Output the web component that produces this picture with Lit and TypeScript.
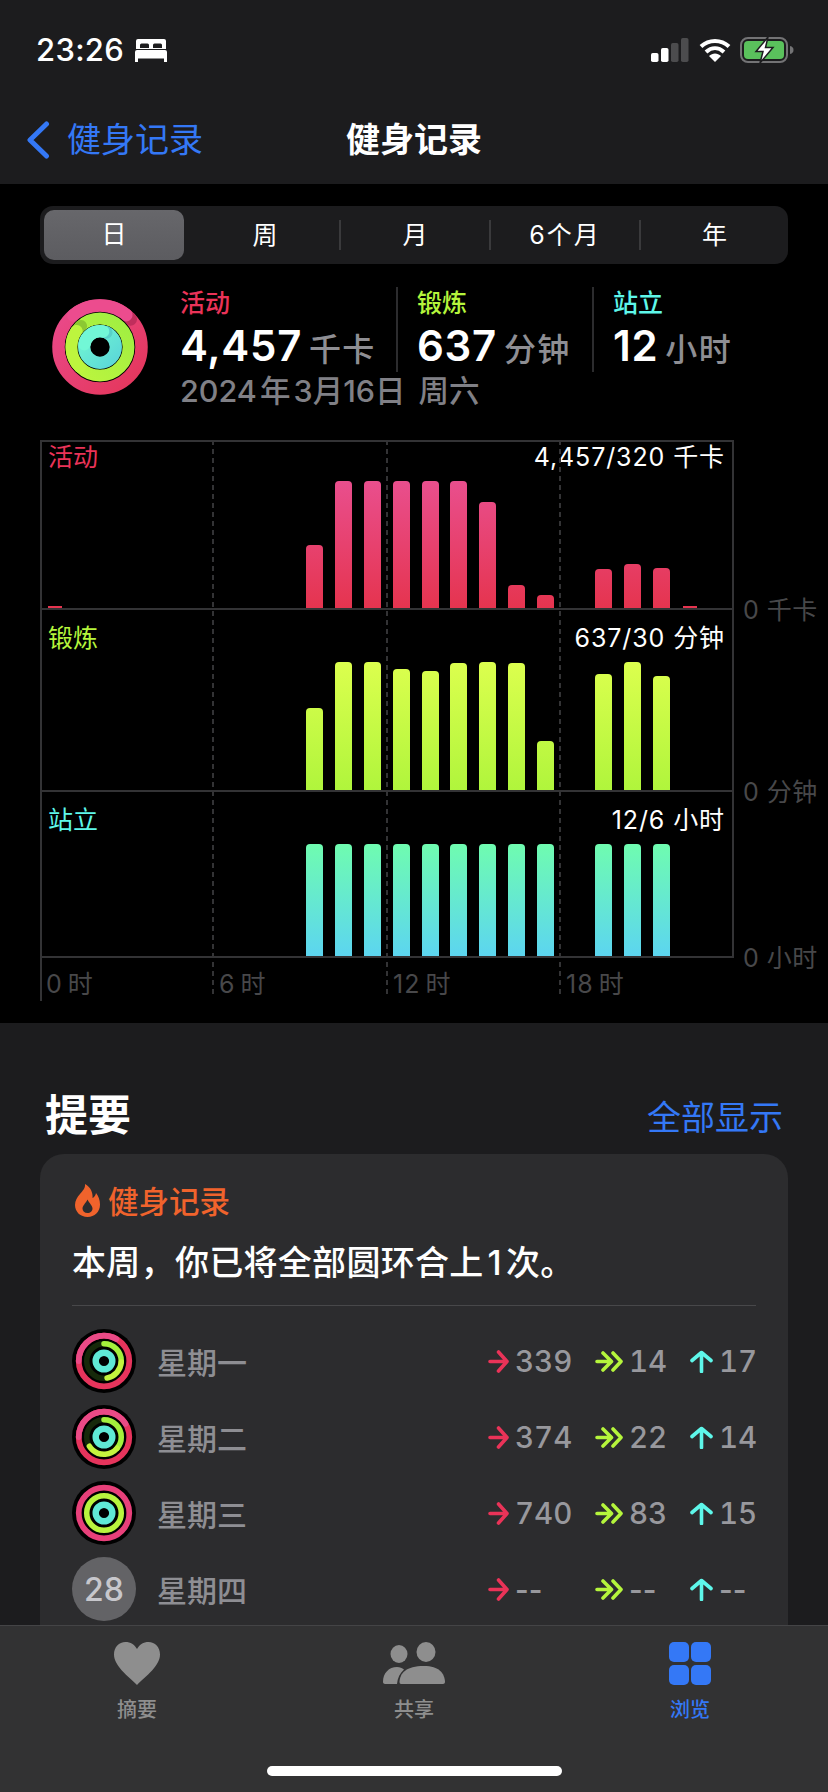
import { LitElement, html, css, svg } from "lit";
import { customElement } from "lit/decorators.js";

const MOVE = [[0,2],[9,63],[10,127],[11,127],[12,127],[13,127],[14,127],[15,106],[16,23],[17,13],[19,39],[20,44],[21,40],[22,2]];
const EX = [[9,82],[10,128],[11,128],[12,121],[13,119],[14,127],[15,128],[16,127],[17,49],[19,116],[20,128],[21,114]];
const STAND = [9,10,11,12,13,14,15,16,17,19,20,21].map((h) => [h, 112]);

const arc = (r: number, sw: number, color: string, pct: number, rot = -90) =>
  svg`<circle cx="50" cy="50" r=${r} fill="none" stroke=${color} stroke-width=${sw} stroke-linecap="round" pathLength="100" stroke-dasharray="${pct} 200" transform="rotate(${rot} 50 50)"></circle>`;
const full = (r: number, sw: number, color: string) =>
  svg`<circle cx="50" cy="50" r=${r} fill="none" stroke=${color} stroke-width=${sw}></circle>`;

const arrowMove = html`<svg class="a-move" viewBox="0 0 21 23"><path d="M2 11.500H18.500M10.500 2L19 11.500L10.500 21" fill="none" stroke="#ea3358" stroke-width="3.600" stroke-linecap="round" stroke-linejoin="round"/></svg>`;
const arrowEx = html`<svg class="a-ex" viewBox="0 0 28 23"><path d="M2 11.500H14M8 3L16.500 11.500L8 20M18 3L26 11.500L18 20" fill="none" stroke="#b5f53c" stroke-width="3.600" stroke-linecap="round" stroke-linejoin="round"/></svg>`;
const arrowStand = html`<svg class="a-st" viewBox="0 0 23 23"><path d="M11.500 21.500V3M2 10.500L11.500 2.500L21 10.500" fill="none" stroke="#5ef7ea" stroke-width="3.600" stroke-linecap="round" stroke-linejoin="round"/></svg>`;

const smallRing = (g: number, p: number) => html`<svg class="sring" viewBox="0 0 100 100">
  <circle cx="50" cy="50" r="50" fill="#000"></circle>
  ${full(39.5, 9, "#e6345c")}
  ${arc(39.5, 9, "#ea4a86", 25 + p - 100, -180)}
  ${full(27, 8.6, "#16290a")}
  ${arc(27, 8.6, "#a4f03c", g * 0.55, -90)}
  ${arc(27, 8.6, "#c4f43e", g * 0.45, -90 + g * 1.98)}
  ${full(13, 10, "#5fe9d6")}
</svg>`;

@customElement("app-root")
export class AppRoot extends LitElement {
  static styles = css`
    :host { display: block; position: relative; width: 828px; height: 1792px; overflow: hidden; background: #1c1c1e; color: #fff; font-family: Inter, "Noto Sans CJK SC", sans-serif; }
    .head { height: 184px; background: #1c1c1e; display: flex; flex-direction: column; }
    .status { height: 100px; display: flex; align-items: flex-start; padding: 36px 34px 0 36px; box-sizing: border-box; }
    .time { font-size: 31px; line-height: 28px; font-weight: 500; letter-spacing: 0.3px; }
    .bed { width: 32px; height: 23px; margin: 3px 0 0 11px; }
    .sp { flex: 1; }
    .sig { width: 38px; height: 24px; margin-top: 2px; }
    .wifi { width: 32px; height: 25px; margin: 1px 0 0 10px; }
    .bat { width: 54px; height: 26px; margin: 1px 0 0 9px; }
    .nav { height: 84px; display: grid; grid-template-columns: 1fr auto 1fr; align-items: start; }
    .back { display: flex; align-items: center; padding-left: 26px; color: #3478f6; font-size: 34px; line-height: 48px; height: 48px; margin-top: 16px; }
    .back svg { width: 24px; height: 38px; margin-right: 17px; }
    .title { font-size: 34px; line-height: 48px; height: 48px; font-weight: 600; margin-top: 16px; }
    main { background: #000; height: 839px; padding-top: 22px; box-sizing: border-box; }
    .seg { margin: 0 40px; height: 58px; border-radius: 13px; background: #1c1c1e; display: grid; grid-template-columns: 149px 150px 150px 150px 149px; align-items: center; position: relative; font-size: 25px; }
    .seg div { height: 30px; line-height: 30px; text-align: center; border-left: 2px solid #3a3a3c; box-sizing: border-box; }
    .seg div.n { border-left-color: transparent; }
    .seg .six { letter-spacing: 2px; }
    .seg .pill { position: absolute; left: 4px; top: 4px; width: 140px; height: 50px; line-height: 48px; border: none; border-radius: 10px; background: linear-gradient(#67676b, #5c5c60); }
    .stats { display: flex; align-items: flex-start; margin-top: 23px; }
    .bigring { width: 96px; height: 96px; margin: 12px 0 0 52px; flex: none; }
    .info { margin-left: 32px; }
    .cols { display: flex; height: 85px; }
    .col { border-right: 2px solid #2c2c2e; width: 218px; box-sizing: border-box; height: 85px; }
    .col + .col { padding-left: 19px; width: 196px; }
    .col:last-child { border-right: none; }
    .lab { font-size: 25px; line-height: 33px; font-weight: 500; }
    .val { font-size: 42px; line-height: 52px; font-weight: 600; letter-spacing: 0.7px; white-space: nowrap; }
    .val span { font-size: 32px; font-weight: 500; color: #8e8e93; letter-spacing: 1.300px; margin-left: 7px; }
    .date { font-size: 30.5px; line-height: 38px; color: #808086; font-weight: 500; word-spacing: -5px; white-space: nowrap; }
    .date span { margin-left: 13px; }
    .move { color: #ea3358; } .ex { color: #b5f53c; } .st { color: #5ef7ea; }
    .chart { position: relative; margin: 30px 0 0 40px; width: 694px; }
    .dash { position: absolute; top: 0; width: 2px; height: 558px; background: repeating-linear-gradient(#333335 0 5px, transparent 5px 9px); }
    .row { display: flex; }
    .plot { width: 694px; box-sizing: border-box; flex: none; display: grid; border-left: 2px solid #333335; border-right: 2px solid #333335; border-bottom: 2px solid #333335; }
    .plot.p1 { height: 170px; border-top: 2px solid #333335; }
    .plot.p2 { height: 182px; }
    .plot.p3 { height: 166px; }
    .labels, .bars { grid-area: 1 / 1; }
    .labels { display: flex; justify-content: space-between; align-self: start; padding: 0 7px 0 6px; font-size: 25px; line-height: 30px; }
    .p2 .labels { padding-top: 13px; } .p3 .labels { padding-top: 13px; }
    .labels .v { color: #fff; letter-spacing: 0.9px; }
    .bars { display: flex; gap: 11.900px; padding-left: 4px; align-items: flex-end; align-self: end; height: 130px; }
    .slot { width: 17px; flex: none; display: flex; justify-content: center; align-items: flex-end; height: 100%; }
    .bar { width: 100%; border-radius: 4px 4px 0 0; background-repeat: no-repeat; background-position: bottom; background-size: 100% 128px; }
    .bar.tiny { width: 14px; border-radius: 0; }
    .bars.m .bar { background-image: linear-gradient(#e94f8e, #e5344f); }
    .bars.e .bar { background-image: linear-gradient(#dcff4e, #b0f53c); }
    .bars.s .bar { background-image: linear-gradient(#6ffcb0, #5cd5f0); background-size: 100% 112px; }
    .axis { flex: none; width: 90px; margin: 0 0 -15px 9px; align-self: flex-end; font-size: 25px; line-height: 30px; letter-spacing: 0.5px; color: #48484a; white-space: nowrap; }
    .times { height: 43px; border-left: 2px solid #333335; width: 694px; box-sizing: border-box; display: grid; grid-template-columns: 173px 174px 173px 1fr; padding: 10px 0 0 4px; font-size: 25px; line-height: 32px; color: #48484a; word-spacing: -3px; letter-spacing: 1px; }
    .sec { display: flex; justify-content: space-between; align-items: center; padding: 0 45px; height: 60px; margin-top: 62px; margin-bottom: 9px; }
    .sec h2 { margin: 0; font-size: 43px; line-height: 60px; font-weight: 700; }
    .sec a { font-size: 34px; color: #3478f6; }
    .card { margin: 0 40px; background: #2c2c2e; border-radius: 24px; padding: 24px 32px 100px; height: 600px; box-sizing: border-box; }
    .ct { display: flex; align-items: center; height: 44px; font-size: 30.5px; font-weight: 500; color: #f0632c; margin-left: 3px; }
    .ct svg { width: 25px; height: 33px; margin-right: 8px; }
    .msg { font-size: 34px; line-height: 46px; font-weight: 500; letter-spacing: 0.3px; margin-top: 18px; padding-bottom: 19px; border-bottom: 1px solid #48484a; white-space: nowrap; }
    .msg span { margin: 0 4px; }
    .day { display: grid; grid-template-columns: 64px 1fr 107px 95px 66px; align-items: center; height: 76px; }
    .list { margin-top: 17px; }
    .sring { width: 64px; height: 64px; display: block; }
    .num28 { width: 64px; height: 64px; border-radius: 50%; background: #636366; color: #c7c7cc; font-size: 32px; font-weight: 500; display: flex; align-items: center; justify-content: center; }
    .name { margin-left: 21px; font-size: 30px; font-weight: 500; color: #8e8e93; }
    .s { display: flex; align-items: center; font-size: 29.5px; color: #98989d; font-weight: 500; font-variant-numeric: tabular-nums; white-space: nowrap; }
    .s.none { font-variant-numeric: normal; letter-spacing: 0; font-weight: 600; }
    .s svg { flex: none; height: 23px; margin-right: 6px; }
    .a-move { width: 21px; } .a-ex { width: 28px; } .a-st { width: 23px; }
    .tab { position: absolute; left: 0; right: 0; bottom: 0; height: 167px; background: #323233; border-top: 1px solid #444446; box-sizing: border-box; display: grid; grid-template-columns: 276px 276px 276px; }
    .ti { display: flex; flex-direction: column; align-items: center; color: #8e8e8e; font-size: 20px; line-height: 24px; padding-top: 16px; font-weight: 500; }
    .ti svg { height: 44px; margin-bottom: 12px; }
    .ti.on { color: #3478f6; }
    .ti:nth-child(1) { margin-left: -2px; }
    .home { position: absolute; left: 267px; bottom: 16px; width: 295px; height: 10px; border-radius: 5px; background: #fff; }
  `;

  private bars(cls: string, data: number[][]) {
    return html`<div class="bars ${cls}">
      ${Array.from({ length: 24 }, (_, h) => {
        const d = data.find((x) => x[0] === h);
        return html`<div class="slot">${d ? html`<div class="bar ${d[1] < 3 ? "tiny" : ""}" style="height:${d[1]}px"></div>` : ""}</div>`;
      })}
    </div>`;
  }

  private day(name: string, ring: unknown, a: string, b: string, c: string) {
    const k = a === "--" ? "s none" : "s";
    return html`<div class="day">${ring}<div class="name">${name}</div>
      <div class=${k}>${arrowMove}${a}</div><div class=${k}>${arrowEx}${b}</div><div class=${k}>${arrowStand}${c}</div></div>`;
  }

  render() {
    return html`
      <div class="head">
        <div class="status">
          <span class="time">23:26</span>
          <svg class="bed" viewBox="0 0 32 23"><path fill="#fff" fill-rule="evenodd" d="M3 0H29A2 2 0 0 1 31 2V10H1V2A2 2 0 0 1 3 0ZM5 6V9H14V6A1.500 1.500 0 0 0 12.500 4.500H6.500A1.500 1.500 0 0 0 5 6ZM18 6V9H27V6A1.500 1.500 0 0 0 25.500 4.500H19.500A1.500 1.500 0 0 0 18 6Z"/><path fill="#fff" d="M2 11H30A2 2 0 0 1 32 13V23H29V19.500H3V23H0V13A2 2 0 0 1 2 11Z"/></svg>
          <span class="sp"></span>
          <svg class="sig" viewBox="0 0 38 24"><rect x="0" y="15" width="7.500" height="9" rx="1.800" fill="#fff"/><rect x="10" y="10" width="7.500" height="14" rx="1.800" fill="#fff"/><rect x="20" y="5" width="7.500" height="19" rx="1.800" fill="#4c4c4e"/><rect x="30" y="0" width="7.500" height="24" rx="1.800" fill="#4c4c4e"/></svg>
          <svg class="wifi" viewBox="0 0 32 25"><path fill="none" stroke="#fff" stroke-width="4" d="M2 9.500C10 2 22 2 30 9.500M7 15C12.500 10 19.500 10 25 15"/><path fill="#fff" d="M16 25L10 19C13.500 15.500 18.500 15.500 22 19Z"/></svg>
          <svg class="bat" viewBox="0 0 54 26"><rect x="1" y="1" width="46" height="24" rx="7" fill="none" stroke="#737375" stroke-width="2"/><rect x="4" y="4" width="40" height="18" rx="4" fill="#5ac15c"/><path d="M50 9C52.500 9.500 53.500 11 53.500 13S52.500 16.500 50 17Z" fill="#737375"/><path d="M28 0L16 14.500H23L20 26L33 10.500H25.500Z" fill="#fff" stroke="#1c1c1e" stroke-width="1.500"/></svg>
        </div>
        <div class="nav">
          <div class="back"><svg viewBox="0 0 24 38"><path d="M20.500 3L4 19L20.500 35" fill="none" stroke="#3478f6" stroke-width="5" stroke-linecap="round" stroke-linejoin="round"/></svg>健身记录</div>
          <div class="title">健身记录</div>
          <div></div>
        </div>
      </div>
      <main>
        <div class="seg">
          <div class="pill">日</div><div class="n"></div>
          <div class="n" style="grid-column:2;grid-row:1">周</div><div>月</div><div class="six">6个月</div><div>年</div>
        </div>
        <div class="stats">
          <svg class="bigring" viewBox="0 0 100 100">
            <defs>
              <linearGradient id="gp" x1="0" y1="0" x2="1" y2="1"><stop offset="0" stop-color="#ea4a8c"/><stop offset="1" stop-color="#e4365a"/></linearGradient>
              <linearGradient id="gg" x1="0" y1="1" x2="1" y2="0"><stop offset="0" stop-color="#bdf53e"/><stop offset="1" stop-color="#9fee42"/></linearGradient>
              <linearGradient id="gt" x1="0" y1="0" x2="1" y2="1"><stop offset="0" stop-color="#70f5d2"/><stop offset="1" stop-color="#5cd8d8"/></linearGradient>
            </defs>
            <circle cx="50" cy="50" r="43" fill="none" stroke="url(#gp)" stroke-width="13.500"></circle>
            ${arc(43, 13.5, "#c02e5c", 0.5, -44)}
            ${arc(43, 13.5, "#ec4c8e", 22, -130)}
            <circle cx="50" cy="50" r="29.500" fill="none" stroke="#000" stroke-width="14.500"></circle>
            <circle cx="50" cy="50" r="29.500" fill="none" stroke="url(#gg)" stroke-width="12.800"></circle>
            ${arc(29.5, 12.8, "#8cc832", 0.5, -134)}
            ${arc(29.5, 12.8, "#bdf53e", 22, -225)}
            <circle cx="50" cy="50" r="16.500" fill="none" stroke="#000" stroke-width="14"></circle>
            <circle cx="50" cy="50" r="16.500" fill="none" stroke="url(#gt)" stroke-width="12.800"></circle>
            ${arc(16.5, 12.8, "#58d0c8", 0.5, -68)}
            ${arc(16.5, 12.8, "#72f7d6", 25.5, -170)}
          </svg>
          <div class="info">
            <div class="cols">
              <div class="col"><div class="lab move">活动</div><div class="val">4,457<span>千卡</span></div></div>
              <div class="col"><div class="lab ex">锻炼</div><div class="val">637<span>分钟</span></div></div>
              <div class="col"><div class="lab st">站立</div><div class="val">12<span>小时</span></div></div>
            </div>
            <div class="date">2024 年 3月16日<span>周六</span></div>
          </div>
        </div>
        <div class="chart">
          <div class="row"><div class="plot p1"><div class="labels"><span class="move">活动</span><span class="v">4,457/320 千卡</span></div>${this.bars("m", MOVE)}</div><div class="axis">0 千卡</div></div>
          <div class="row"><div class="plot p2"><div class="labels"><span class="ex">锻炼</span><span class="v">637/30 分钟</span></div>${this.bars("e", EX)}</div><div class="axis">0 分钟</div></div>
          <div class="row"><div class="plot p3"><div class="labels"><span class="st">站立</span><span class="v">12/6 小时</span></div>${this.bars("s", STAND)}</div><div class="axis">0 小时</div></div>
          <div class="times"><span>0 时</span><span>6 时</span><span>12 时</span><span>18 时</span></div>
          <div class="dash" style="left:172px"></div><div class="dash" style="left:346px"></div><div class="dash" style="left:519px"></div>
        </div>
      </main>
      <div class="sec"><h2>提要</h2><a>全部显示</a></div>
      <div class="card">
        <div class="ct"><svg viewBox="0 0 25 33"><path fill="#f0632c" fill-rule="evenodd" d="M10 0C10.500 4 8 6.500 5 10C2 13.500 0 16.500 0 21C0 28 5.500 33 12.500 33C19.500 33 25 28 25 20.500C25 16 23.500 12 21 9C20.500 11.500 19.500 13 17.500 14C18 8.500 15.500 3 10 0ZM12.500 29C9.500 29 7.500 27 7.500 24.500C7.500 21.500 10.500 19.500 12.500 15.500C14.500 19.500 17.500 21.500 17.500 24.500C17.500 27 15.500 29 12.500 29Z"/></svg>健身记录</div>
        <div class="msg">本周，你已将全部圆环合上<span>1</span>次。</div>
        <div class="list">
          ${this.day("星期一", smallRing(47, 108), "339", "14", "17")}
          ${this.day("星期二", smallRing(66, 116), "374", "22", "14")}
          ${this.day("星期三", html`<svg class="sring" viewBox="0 0 100 100"><circle cx="50" cy="50" r="50" fill="#000"></circle>${full(39.5, 9, "#e8407a")}${full(27, 8.6, "#b8f43e")}${full(13, 10, "#5fe9d6")}</svg>`, "740", "83", "15")}
          ${this.day("星期四", html`<div class="num28">28</div>`, "--", "--", "--")}
        </div>
      </div>
      <div class="tab">
        <div class="ti"><svg viewBox="0 0 46 44" width="46"><path fill="#8e8e8e" d="M23 43C14 34 0 24 0 12.500C0 5 5 0 11.500 0C16.500 0 20.500 2.500 23 7C25.500 2.500 29.500 0 34.500 0C41 0 46 5 46 12.500C46 24 32 34 23 43Z"/></svg>摘要</div>
        <div class="ti"><svg viewBox="0 0 62 44" width="62"><ellipse cx="16" cy="12" rx="8.500" ry="9" fill="#8e8e8e"/><ellipse cx="43" cy="10" rx="9.500" ry="10" fill="#8e8e8e"/><path fill="#8e8e8e" d="M0 40C0 31 6 25 14 25C17 25 19 26 21 27.500C17 31 14.500 36 14 42H2C1 42 0 41 0 40Z"/><path fill="#8e8e8e" d="M18 42C17 42 16.500 41 16.500 40C17 31 23 24 41 24C56 24 61.500 31 62 40C62 41 61 42 60 42Z"/></svg>共享</div>
        <div class="ti on"><svg viewBox="0 0 42 44" width="42"><rect width="20" height="20" rx="5" fill="#3478f6"/><rect x="22" width="20" height="20" rx="5" fill="#3478f6"/><rect y="23" width="20" height="20" rx="5" fill="#3478f6"/><rect x="22" y="23" width="20" height="20" rx="5" fill="#3478f6"/></svg>浏览</div>
      </div>
      <div class="home"></div>
    `;
  }
}
